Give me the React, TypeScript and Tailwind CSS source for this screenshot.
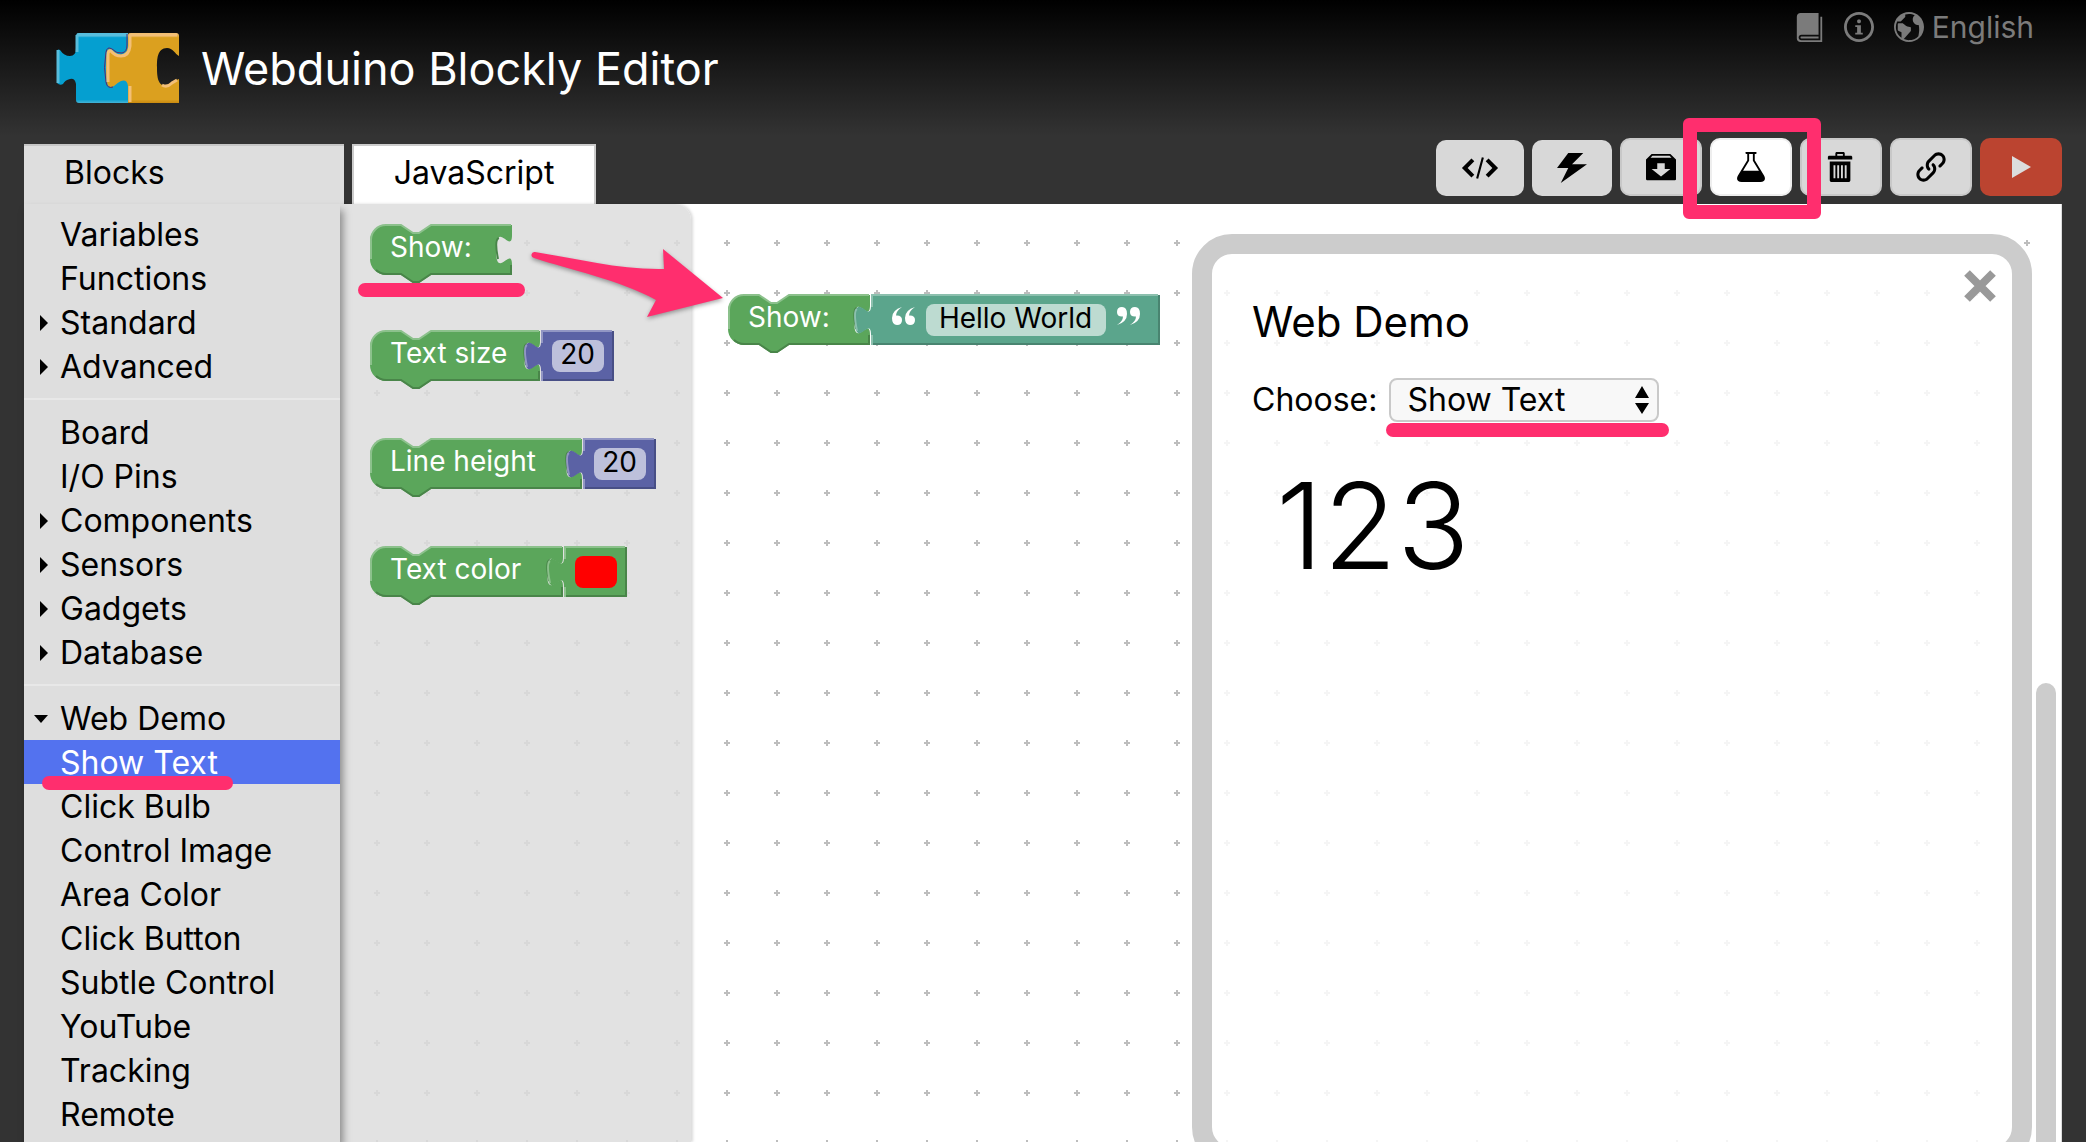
import React from "react";
import {
  ImBin,
  ImBook,
  ImBoxAdd,
  ImEarth,
  ImEmbed2,
  ImInfo,
  ImLab,
  ImLink,
  ImPower,
} from "react-icons/im";

type Item = { name: string; arrow?: "right" | "down"; selected?: boolean };

const groups: Item[][] = [
  [
    { name: "Variables" },
    { name: "Functions" },
    { name: "Standard", arrow: "right" },
    { name: "Advanced", arrow: "right" },
  ],
  [
    { name: "Board" },
    { name: "I/O Pins" },
    { name: "Components", arrow: "right" },
    { name: "Sensors", arrow: "right" },
    { name: "Gadgets", arrow: "right" },
    { name: "Database", arrow: "right" },
  ],
  [
    { name: "Web Demo", arrow: "down" },
    { name: "Show Text", selected: true },
    { name: "Click Bulb" },
    { name: "Control Image" },
    { name: "Area Color" },
    { name: "Click Button" },
    { name: "Subtle Control" },
    { name: "YouTube" },
    { name: "Tracking" },
    { name: "Remote" },
  ],
];

function Logo() {
  return (
    <svg className="h-[72px] w-[126px]" viewBox="0 0 126 72" aria-hidden="true">
      <defs>
        <linearGradient id="blue" x1="0" y1="0" x2="0" y2="1">
          <stop offset="0" stopColor="#5fc0df" />
          <stop offset="0.07" stopColor="#059fd0" />
          <stop offset="0.95" stopColor="#059fd0" />
          <stop offset="1" stopColor="#47b4d6" />
        </linearGradient>
        <linearGradient id="gold" x1="0" y1="0" x2="0" y2="1">
          <stop offset="0" stopColor="#f4c278" />
          <stop offset="0.07" stopColor="#dba01f" />
          <stop offset="0.95" stopColor="#dba01f" />
          <stop offset="1" stopColor="#c98a10" />
        </linearGradient>
      </defs>
      <path
        d="M24 1H73V71H24Q21 71 21 68V52Q20 46 15 47Q10 48 8 52Q5 54 2 51V21Q2 16 5 18Q9 24 15 24Q21 24 21 16V4Q21 1 24 1Z"
        fill="url(#blue)"
      />
      <path d="M22 3H73M3 18V51M22 3V20" fill="none" stroke="#58bddc" strokeWidth="3" />
      <path
        d="M76 1H121Q124 1 124 4V24C120 22 118 16 112 16C102 16 102 28 102 35C102 42 102 54 111 54C118 54 120 48 124 47V71H73V54Q72 47 66 49Q62 51 59 54Q53 57 52 50Q50 36 52 20Q53 15 58 19Q63 24 68 22Q73 20 73 13V4Q73 1 76 1Z"
        fill="url(#gold)"
      />
      <path
        d="M72 2V13Q72 20 67 21Q62 22 57 17Q52 14 51 20Q48 36 51 50Q52 57 58 55"
        fill="none"
        stroke="#5b2a6b"
        strokeWidth="1"
      />
      <path
        d="M122 3H75V14Q74 24 66 24Q60 24 56 19Q53 18 53 23V50"
        fill="none"
        stroke="#f3bf77"
        strokeWidth="3"
      />
      <path d="M75 70V54" fill="none" stroke="#f3bf77" strokeWidth="3" />
      <path d="M107 53Q112 56 117 51L122 48" fill="none" stroke="#f3bf77" strokeWidth="3" />
    </svg>
  );
}

function Underline({ place }: { place: string }) {
  return <span aria-hidden="true" className={`pointer-events-none absolute h-[14px] rounded-full bg-[#ff2e6e] ${place}`} />;
}

const TAB = "v10c0 20-16-16-16 15s16-5 16 15";
const GREEN = { fill: "#5ba65b", light: "#8cc18c", dark: "#498549" };
const BLUE = { fill: "#5b62a5", light: "#9296c4", dark: "#484f86" };
const TEAL = { fill: "#5ba58c", light: "#8cc0ae", dark: "#498470" };

function Statement({ width, children }: { width: number; children: React.ReactNode }) {
  const r = width - 1;
  return (
    <div className="relative flex h-[52px] shrink-0 items-start pl-5" style={{ width }}>
      <svg className="absolute top-0 left-0 h-[60px] overflow-visible" style={{ width }} aria-hidden="true">
        <path
          d={`M0 17A16 16 0 0 1 16 1H31l12 8h6l12-8H${r + 1}${TAB}V51H61l-12 8h-6l-12-8H16A16 16 0 0 1 0 35Z`}
          fill={GREEN.fill}
        />
        <path d={`M${r} 41V50H61l-12 8h-6l-12-8H16A16 16 0 0 1 6 46`} fill="none" stroke={GREEN.dark} strokeWidth="2" />
        <path d={`M${r - 13} 35q-4-20 1-21`} fill="none" stroke={GREEN.dark} strokeWidth="2" />
        <path d={`M1 35V17A15 15 0 0 1 16 1H31l12 8h6l12-8H${r}`} fill="none" stroke={GREEN.light} strokeWidth="2" />
      </svg>
      <span className="relative text-[28px] leading-[46px] whitespace-nowrap text-white">{children}</span>
    </div>
  );
}

function Value({
  width,
  color,
  children,
}: {
  width: number;
  color: typeof GREEN;
  children: React.ReactNode;
}) {
  return (
    <div className="relative ml-px flex h-[52px] shrink-0 items-start justify-center pt-[10px]" style={{ width }}>
      <svg className="absolute top-0 left-0 h-[52px] overflow-visible" style={{ width }} aria-hidden="true">
        <path d={`M0 1${TAB}V51H${width}V1Z`} fill={color.fill} />
        <path d={`M0 50H${width - 1}V1`} fill="none" stroke={color.dark} strokeWidth="2" />
        <path d={`M1 51V41M-14 37q-4-20 0-22M1 13V1H${width - 2}`} fill="none" stroke={color.light} strokeWidth="2" />
      </svg>
      {children}
    </div>
  );
}

function Quote({ flip }: { flip?: boolean }) {
  return (
    <svg className={flip ? "mt-[3px] h-[18px] w-6 rotate-180" : "mt-[3px] h-[18px] w-6"} viewBox="0 0 24 18" aria-hidden="true">
      <path
        d="M10 0Q4 4 4 8.500Q10 8 10 13Q10 18 5 18Q0 18 0 11Q0 3 10 0ZM23 0Q17 4 17 8.500Q23 8 23 13Q23 18 18 18Q13 18 13 11Q13 3 23 0Z"
        fill="currentColor"
      />
    </svg>
  );
}

function ToolButton({
  label,
  look,
  children,
}: {
  label: string;
  look: string;
  children: React.ReactNode;
}) {
  return (
    <button type="button" aria-label={label} className={`flex items-center justify-center rounded-[10px] ${look}`}>
      {children}
    </button>
  );
}

const numberField =
  "relative h-8 w-[52px] rounded-lg bg-white/60 pb-1 text-center text-[28px] leading-7 text-black outline-none";

export default function App() {
  return (
    <div className="flex h-screen flex-col overflow-hidden bg-[linear-gradient(to_bottom,#000,#333_136px)] font-['Inter',sans-serif] text-black">
      <header className="relative flex h-[136px] shrink-0 items-center pl-[55px]">
        <Logo />
        <h1 className="ml-5 text-[45px] leading-none text-white">Webduino Blockly Editor</h1>
        <nav className="absolute top-1 right-[52px] flex h-[46px] items-center gap-5 text-[30px] text-[#7b7b7b]">
          <a href="#docs" aria-label="Documentation">
            <ImBook size={29} />
          </a>
          <a href="#about" aria-label="About">
            <ImInfo size={30} />
          </a>
          <a href="#language" className="flex items-center gap-2">
            <ImEarth size={30} />
            English
          </a>
        </nav>
      </header>

      <div className="flex h-[68px] shrink-0 items-end gap-2 pr-6 pl-6">
        <button
          type="button"
          className="h-[60px] w-80 border-t-2 border-[#c6c6c6] bg-[#dedede] pb-1 pl-10 text-left text-[32px]"
        >
          Blocks
        </button>
        <button
          type="button"
          className="h-[60px] w-[244px] border-2 border-b-0 border-[#ccc] bg-white pb-1 text-[32px]"
        >
          JavaScript
        </button>
        <div className="relative ml-auto flex items-end gap-2 pb-2">
          <ToolButton label="Code" look="h-14 w-[88px] bg-[#d8d8d8]">
            <ImEmbed2 size={38} />
          </ToolButton>
          <ToolButton label="Flash" look="h-14 w-20 bg-[#d8d8d8]">
            <ImPower size={30} />
          </ToolButton>
          <ToolButton label="Save" look="h-[58px] w-[82px] border-2 border-[#c8c8c8] bg-[#d8d8d8]">
            <ImBoxAdd size={30} />
          </ToolButton>
          <ToolButton label="Web Demo panel" look="h-[58px] w-[82px] border-2 border-[#eee] bg-white">
            <ImLab size={30} />
          </ToolButton>
          <ToolButton label="Delete" look="h-[58px] w-[82px] border-2 border-[#c8c8c8] bg-[#d8d8d8]">
            <ImBin size={30} />
          </ToolButton>
          <ToolButton label="Link" look="h-[58px] w-[82px] border-2 border-[#c8c8c8] bg-[#d8d8d8]">
            <ImLink size={30} />
          </ToolButton>
          <ToolButton label="Run" look="h-[58px] w-[82px] bg-[#bb4430]">
            <svg className="h-6 w-5" viewBox="0 0 20 24" aria-hidden="true">
              <path d="M1 1L20 12L1 23Z" fill="#dcdcdc" />
            </svg>
          </ToolButton>
          <span
            aria-hidden="true"
            className="pointer-events-none absolute right-[241px] -bottom-[15px] z-30 h-[101px] w-[138px] rounded-md border-[14px] border-[#ff2e6e]"
          />
        </div>
      </div>

      <div className="relative flex min-h-0 flex-1 px-6">
        <aside className="relative z-10 w-[316px] shrink-0 bg-[#dedede] pt-2 shadow-[3px_6px_8px_rgba(0,0,0,0.4)]">
          {groups.map((group, g) => (
            <ul key={g} className={g > 0 ? "mt-[10px] border-t-2 border-[#e8e8e8] pt-[10px]" : ""}>
              {group.map((item) => (
                <li key={item.name} className="relative">
                  <button
                    type="button"
                    className={
                      item.selected
                        ? "flex h-11 w-full items-center bg-[#5372ef] pt-0.5 text-[32px] text-white"
                        : "flex h-11 w-full items-center pt-0.5 text-[32px]"
                    }
                  >
                    <span className="flex w-9 shrink-0 pl-4">
                      {item.arrow === "right" && (
                        <svg className="h-4 w-2" viewBox="0 0 8 16" aria-hidden="true">
                          <path d="M0 0L8 8L0 16Z" />
                        </svg>
                      )}
                      {item.arrow === "down" && (
                        <svg className="-ml-[6px] h-2 w-[14px]" viewBox="0 0 14 8" aria-hidden="true">
                          <path d="M0 0H14L7 8Z" />
                        </svg>
                      )}
                    </span>
                    {item.name}
                  </button>
                  {item.selected && <Underline place="left-[18px] -bottom-[6px] z-10 w-[191px]" />}
                </li>
              ))}
            </ul>
          ))}
        </aside>

        <main className="relative flex min-w-0 flex-1 border-r border-[#ddd] bg-white">
          <svg className="absolute inset-0 h-full w-full" aria-hidden="true">
            <defs>
              <pattern id="grid" width="50" height="50" x="12" y="14" patternUnits="userSpaceOnUse">
                <path d="M25 22V28M22 25H28" stroke="#bdbdbd" strokeWidth="2" />
              </pattern>
            </defs>
            <rect width="100%" height="100%" fill="url(#grid)" />
          </svg>

          <section
            aria-label="Block palette"
            className="relative flex w-[351px] shrink-0 flex-col gap-14 rounded-tr-2xl bg-[#dddddd]/85 pt-5 pl-[30px] shadow-[2px_0_3px_rgba(0,0,0,0.15)]"
          >
            <div className="relative flex h-[50px]">
              <Statement width={142}>Show:</Statement>
              <Underline place="-left-3 top-[59px] w-[167px]" />
            </div>
            <div className="flex">
              <Statement width={170}>Text size</Statement>
              <Value width={73} color={BLUE}>
                <input aria-label="Text size" defaultValue="20" className={numberField} />
              </Value>
            </div>
            <div className="flex">
              <Statement width={212}>Line height</Statement>
              <Value width={73} color={BLUE}>
                <input aria-label="Line height" defaultValue="20" className={numberField} />
              </Value>
            </div>
            <div className="flex">
              <Statement width={193}>Text color</Statement>
              <Value width={63} color={GREEN}>
                <button type="button" aria-label="Text color" className="relative h-8 w-[42px] rounded-lg bg-[#f00]" />
              </Value>
            </div>
          </section>

          <div className="absolute top-[90px] left-[388px] flex">
            <Statement width={142}>Show:</Statement>
            <Value width={289} color={TEAL}>
              <div className="relative flex items-start gap-[10px] text-white">
                <Quote />
                <input
                  aria-label="Text to show"
                  defaultValue="Hello World"
                  className="h-8 w-[180px] rounded-lg bg-white/60 pb-1 text-center text-[28px] leading-7 text-black outline-none"
                />
                <Quote flip />
              </div>
            </Value>
          </div>

          <svg
            className="pointer-events-none absolute top-11 left-[190px] z-20 h-[76px] w-[196px] drop-shadow-[0_2px_2px_rgba(0,0,0,0.35)]"
            viewBox="0 0 196 76"
            aria-hidden="true"
          >
            <path d="M5 4C50 11 90 22 134 21L133 1L193 50L117 69L126 52C90 32 40 22 4 10A3 3 0 0 1 5 4Z" fill="#ff2e6e" />
          </svg>

          <section
            aria-label="Web Demo"
            className="absolute top-[30px] right-[29px] -bottom-[25px] w-[840px] rounded-[40px] border-[20px] border-[#ccc] bg-white/85 px-10"
          >
            <button type="button" aria-label="Close" className="absolute top-4 right-4 size-8">
              <svg viewBox="0 0 32 32" aria-hidden="true">
                <path d="M3 3L29 29M29 3L3 29" stroke="#999" strokeWidth="8" />
              </svg>
            </button>
            <h2 className="mt-11 text-[42px] leading-[48px]">Web Demo</h2>
            <div className="relative mt-8 flex h-11 items-center gap-3">
              <label htmlFor="demo" className="text-[32px]">
                Choose:
              </label>
              <div className="relative">
                <select
                  id="demo"
                  defaultValue="Show Text"
                  className="h-11 w-[270px] appearance-none rounded-lg border-2 border-[#c9c9c9] bg-[#f8f8f8] pl-4 text-[32px] leading-10"
                >
                  <option>Show Text</option>
                  <option>Click Bulb</option>
                </select>
                <svg
                  className="pointer-events-none absolute top-2 right-[10px] h-7 w-[14px]"
                  viewBox="0 0 14 28"
                  aria-hidden="true"
                >
                  <path d="M7 0L14 12H0ZM7 28L14 17H0Z" />
                </svg>
                <Underline place="-left-[3px] top-[45px] w-[283px]" />
              </div>
            </div>
            <p className="mt-10 ml-6 text-[120px] leading-[128px] font-light">123</p>
          </section>

          <span aria-hidden="true" className="absolute top-[479px] right-[5px] -bottom-5 w-5 rounded-full bg-[#ccc]" />
        </main>
      </div>
    </div>
  );
}
